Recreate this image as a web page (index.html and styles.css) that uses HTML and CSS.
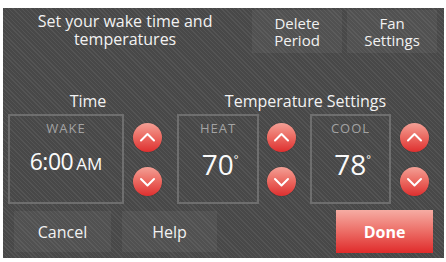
FILE: index.html
```html
<!DOCTYPE html>
<html>
<head>
<meta charset="utf-8">
<link rel="stylesheet" href="styles.css">
</head>
<body>
<div class="panel">
  <div class="header">
    <div class="title">Set your wake time and<br>temperatures</div>
    <div class="tbtn">Delete<br>Period</div>
    <div class="tbtn">Fan<br>Settings</div>
  </div>
  <div class="middle">
    <div class="group time-group">
      <div class="glabel">Time</div>
      <div class="grow">
        <div class="box wake">
          <div class="blabel">WAKE</div>
          <div class="bvalue"><span class="tval">6:00</span><span class="ampm">AM</span></div>
        </div>
        <div class="arrows">
          <div class="circ"><svg viewBox="0 0 29 29" width="29" height="29"><path d="M8 17.5 L14.5 11 L21 17.5" fill="none" stroke="#fff" stroke-width="2" stroke-linecap="round" stroke-linejoin="round"/></svg></div>
          <div class="circ"><svg viewBox="0 0 29 29" width="29" height="29"><path d="M8 12 L14.5 18.5 L21 12" fill="none" stroke="#fff" stroke-width="2" stroke-linecap="round" stroke-linejoin="round"/></svg></div>
        </div>
      </div>
    </div>
    <div class="group temp-group">
      <div class="glabel">Temperature Settings</div>
      <div class="grow">
        <div class="box heat">
          <div class="blabel">HEAT</div>
          <div class="bvalue">70<span class="deg">°</span></div>
        </div>
        <div class="arrows">
          <div class="circ"><svg viewBox="0 0 29 29" width="29" height="29"><path d="M8 17.5 L14.5 11 L21 17.5" fill="none" stroke="#fff" stroke-width="2" stroke-linecap="round" stroke-linejoin="round"/></svg></div>
          <div class="circ"><svg viewBox="0 0 29 29" width="29" height="29"><path d="M8 12 L14.5 18.5 L21 12" fill="none" stroke="#fff" stroke-width="2" stroke-linecap="round" stroke-linejoin="round"/></svg></div>
        </div>
        <div class="box cool">
          <div class="blabel">COOL</div>
          <div class="bvalue">78<span class="deg">°</span></div>
        </div>
        <div class="arrows">
          <div class="circ"><svg viewBox="0 0 29 29" width="29" height="29"><path d="M8 17.5 L14.5 11 L21 17.5" fill="none" stroke="#fff" stroke-width="2" stroke-linecap="round" stroke-linejoin="round"/></svg></div>
          <div class="circ"><svg viewBox="0 0 29 29" width="29" height="29"><path d="M8 12 L14.5 18.5 L21 12" fill="none" stroke="#fff" stroke-width="2" stroke-linecap="round" stroke-linejoin="round"/></svg></div>
        </div>
      </div>
    </div>
  </div>
  <div class="footer">
    <div class="bbtn cancel">Cancel</div>
    <div class="bbtn help">Help</div>
    <div class="spacer"></div>
    <div class="done">Done</div>
  </div>
</div>
</body>
</html>
```

FILE: styles.css
```css
html, body {
  margin: 0;
  padding: 0;
  background: #ffffff;
}

body {
  font-family: "Open Sans", "Noto Sans", sans-serif;
  color: #f2f2f2;
}

.panel {
  margin: 8px 0 0 3px;
  width: 441px;
  height: 250px;
  display: flex;
  flex-direction: column;
  background-color: #4b4b4b;
  background-image: repeating-linear-gradient(45deg, rgba(255,255,255,0.05) 0px, rgba(255,255,255,0.05) 1px, rgba(0,0,0,0.04) 1px, rgba(0,0,0,0.04) 3px);
}

.header {
  display: flex;
  padding: 2px 7px 0 0;
  height: 45px;
}

.title {
  width: 247px;
  text-align: center;
  font-size: 16px;
  line-height: 18px;
  padding-top: 2px;
}

.tbtn {
  width: 91px;
  height: 43px;
  margin-left: 5px;
  display: flex;
  align-items: center;
  justify-content: center;
  text-align: center;
  font-size: 15px;
  line-height: 17px;
  background: rgba(255,255,255,0.05);
}

.tbtn:first-of-type {
  margin-left: 0;
}

.middle {
  display: flex;
  padding: 36px 0 0 5px;
  gap: 15px;
}

.group {
  display: flex;
  flex-direction: column;
}

.glabel {
  text-align: center;
  font-size: 16px;
  line-height: 20px;
  height: 20px;
  margin-bottom: 3px;
}

.time-group .glabel {
  padding-left: 6px;
}

.temp-group .glabel {
  padding-left: 5px;
}

.grow {
  display: flex;
}

.box {
  box-sizing: border-box;
  height: 90px;
  border: 2px solid #6e6e6e;
  display: flex;
  flex-direction: column;
  align-items: center;
}

.wake { width: 116px; }
.heat { width: 82px; }
.cool { width: 81px; margin-left: 14px; }

.blabel {
  font-size: 13px;
  line-height: 14px;
  margin-top: 5px;
  color: #a3a3a3;
  letter-spacing: 1px;
}

.bvalue {
  margin-top: 9px;
  font-size: 28px;
  line-height: 30px;
  color: #fafafa;
  padding-left: 4px;
}

.wake .bvalue {
  padding-left: 0;
}

.tval {
  font-size: 23px;
  letter-spacing: -0.5px;
}

.ampm {
  font-size: 17px;
  margin-left: 3px;
}

.deg {
  font-size: 11px;
  vertical-align: 12px;
}

.arrows {
  display: flex;
  flex-direction: column;
  gap: 15px;
  padding-top: 9px;
  margin-left: 8px;
}

.time-group .arrows {
  margin-left: 9px;
}

.cool + .arrows {
  margin-left: 9px;
}

.circ {
  width: 29px;
  height: 29px;
  border-radius: 50%;
  background: linear-gradient(180deg, #f3a096 0%, #ec6e65 45%, #de2f2f 100%);
  box-shadow: 0 0 1px rgba(0,0,0,0.5);
}

.circ svg {
  display: block;
}

.footer {
  display: flex;
  align-items: center;
  margin-top: 5px;
  padding: 0 11px;
  height: 45px;
}

.bbtn {
  height: 41px;
  display: flex;
  align-items: center;
  justify-content: center;
  font-size: 16px;
  background: rgba(255,255,255,0.05);
}

.cancel { width: 97px; }
.help { width: 95px; margin-left: 11px; }

.spacer { flex: 1; }

.done {
  width: 97px;
  height: 43px;
  display: flex;
  align-items: center;
  justify-content: center;
  font-size: 16px;
  font-weight: bold;
  color: #ffffff;
  background: linear-gradient(180deg, #f6aca3 0%, #ec6d66 50%, #e02b2b 100%);
}
```
